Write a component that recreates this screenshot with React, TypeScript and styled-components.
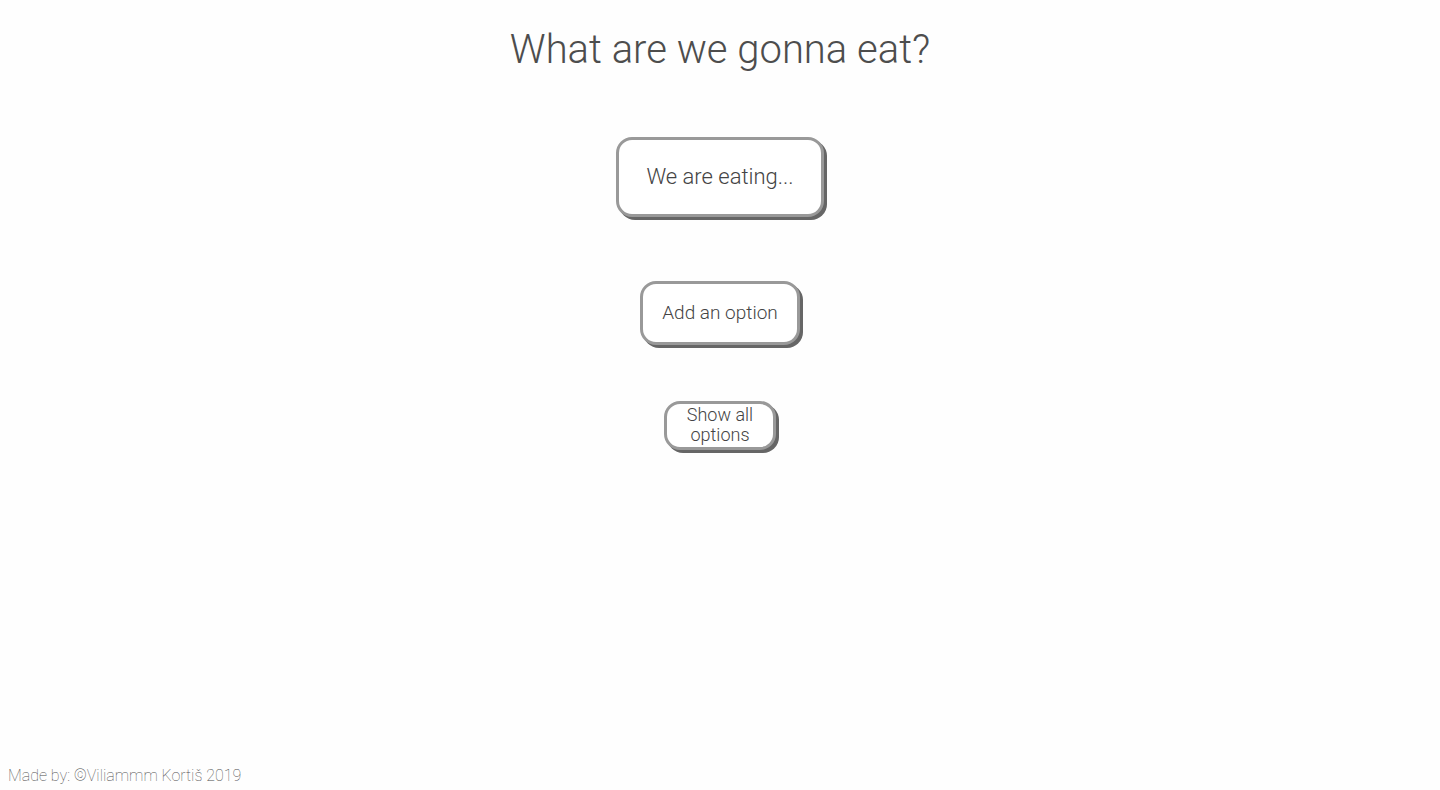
import React from "react";
import styled, { createGlobalStyle } from "styled-components";

const GlobalStyle = createGlobalStyle`
  *, *::before, *::after { box-sizing: border-box; }
  body {
    margin: 0;
    background: #fefefe;
    color: #4d4d4d;
    font-family: Roboto, "Liberation Sans", sans-serif;
    font-weight: 300;
  }
`;

const Page = styled.div`
  display: flex;
  flex-direction: column;
  min-height: 100vh;
`;

const Main = styled.main`
  display: flex;
  flex: 1;
  flex-direction: column;
  align-items: center;
`;

const Title = styled.h1`
  margin: 26px 0 63px;
  font-size: 40px;
  font-weight: 300;
  line-height: 48px;
  text-align: center;
`;

const sizes = {
  large: { width: 208, height: 80, font: 22, gap: 64 },
  medium: { width: 160, height: 64, font: 19, gap: 56 },
  small: { width: 112, height: 49, font: 18, gap: 0 },
};

const ActionButton = styled.button<{ $size: keyof typeof sizes }>`
  width: ${({ $size }) => sizes[$size].width}px;
  height: ${({ $size }) => sizes[$size].height}px;
  margin-bottom: ${({ $size }) => sizes[$size].gap}px;
  padding: 0 16px 1px;
  border: 3px solid #999;
  border-radius: 16px;
  background: #fff;
  box-shadow: 3px 3px 0 #666;
  color: #444;
  font-family: inherit;
  font-size: ${({ $size }) => sizes[$size].font}px;
  font-weight: 300;
  line-height: 20px;
  cursor: pointer;
`;

const Footer = styled.footer`
  padding: 0 8px 4px;
  font-size: 16px;
  font-weight: 100;
  line-height: 20px;
`;

export default function App() {
  return (
    <Page>
      <GlobalStyle />
      <Main>
        <Title>What are we gonna eat?</Title>
        <ActionButton type="button" $size="large">We are eating...</ActionButton>
        <ActionButton type="button" $size="medium">Add an option</ActionButton>
        <ActionButton type="button" $size="small">Show all options</ActionButton>
      </Main>
      <Footer>Made by: ©Viliammm Kortiš 2019</Footer>
    </Page>
  );
}
